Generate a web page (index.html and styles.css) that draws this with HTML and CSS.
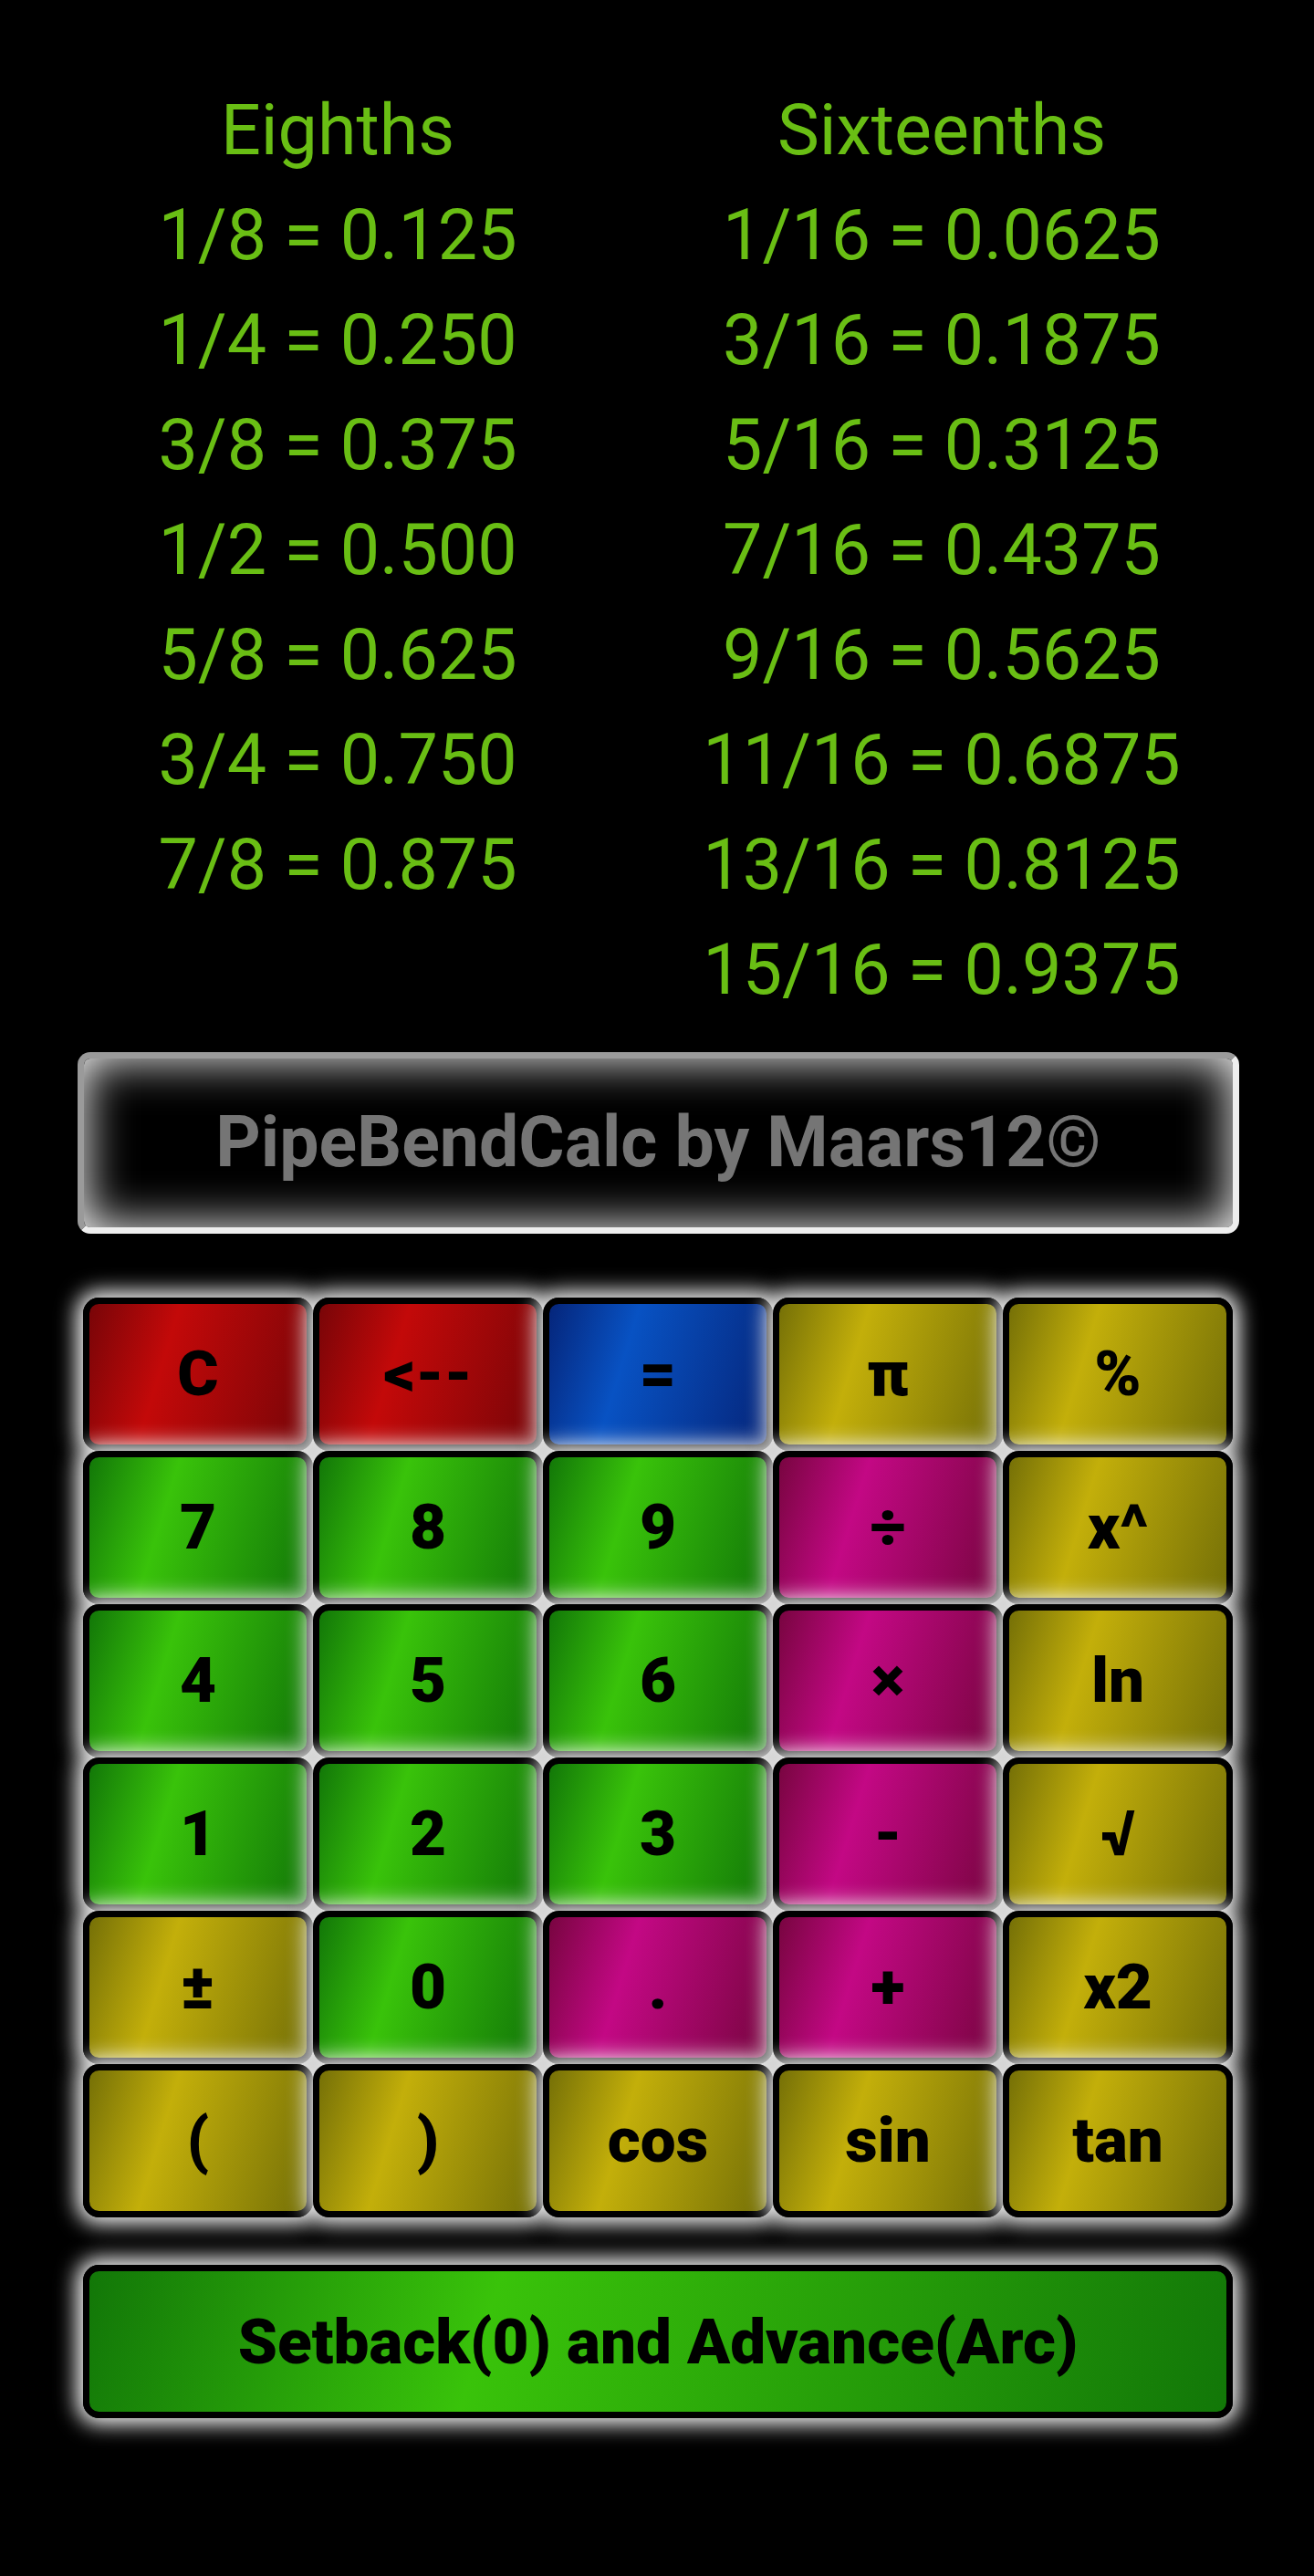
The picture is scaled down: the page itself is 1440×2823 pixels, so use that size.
FILE: index.html
```html
<!DOCTYPE html>
<html lang="en">
<head>
<meta charset="utf-8">
<title>PipeBendCalc</title>
<link rel="stylesheet" href="styles.css">
</head>
<body>
<main class="calculator">
  <section class="fractions">
    <ul class="column eighths">
      <li>Eighths</li><li>1/8 = 0.125</li><li>1/4 = 0.250</li><li>3/8 = 0.375</li><li>1/2 = 0.500</li><li>5/8 = 0.625</li><li>3/4 = 0.750</li><li>7/8 = 0.875</li>
    </ul>
    <ul class="column sixteenths">
      <li>Sixteenths</li><li>1/16 = 0.0625</li><li>3/16 = 0.1875</li><li>5/16 = 0.3125</li><li>7/16 = 0.4375</li><li>9/16 = 0.5625</li><li>11/16 = 0.6875</li><li>13/16 = 0.8125</li><li>15/16 = 0.9375</li>
    </ul>
  </section>
  <div class="display">PipeBendCalc by Maars12©</div>
  <section class="keypad">
    <button class="key red">C</button><button class="key red">&lt;--</button><button class="key blue">=</button><button class="key yellow">π</button><button class="key yellow">%</button>
    <button class="key green">7</button><button class="key green">8</button><button class="key green">9</button><button class="key pink">÷</button><button class="key yellow">x^</button>
    <button class="key green">4</button><button class="key green">5</button><button class="key green">6</button><button class="key pink">×</button><button class="key yellow">ln</button>
    <button class="key green">1</button><button class="key green">2</button><button class="key green">3</button><button class="key pink">-</button><button class="key yellow">√</button>
    <button class="key yellow">±</button><button class="key green">0</button><button class="key pink">.</button><button class="key pink">+</button><button class="key yellow">x2</button>
    <button class="key yellow">(</button><button class="key yellow">)</button><button class="key yellow">cos</button><button class="key yellow">sin</button><button class="key yellow">tan</button>
  </section>
  <button class="key green wide">Setback(0) and Advance(Arc)</button>
</main>
</body>
</html>
```
FILE: styles.css
```css
* { box-sizing: border-box; }

body {
  margin: 0;
  min-height: 2823px;
  background: #000;
  font-family: Roboto, "Liberation Sans", sans-serif;
}

.calculator {
  display: flex;
  flex-direction: column;
  padding: 85px 82px 0 85px;
}

.fractions {
  display: flex;
  height: 1068px;
  padding-left: 60px;
  color: #69be14;
  font-size: 77.2px;
  line-height: 115px;
  text-align: center;
  white-space: nowrap;
}

.column { margin: 0; padding: 0; list-style: none; }
.eighths { width: 450px; }
.sixteenths { width: 550px; margin-left: 162px; }

.display {
  height: 199px;
  border: 7px solid;
  border-color: #9a9a9a #eee #eee #9a9a9a;
  border-radius: 14px;
  box-shadow: inset 0 0 52.5px #fff;
  color: #757575;
  font-size: 77px;
  font-weight: 700;
  line-height: 185px;
  text-align: center;
}

.keypad {
  display: grid;
  grid-template-columns: repeat(5, 252px);
  grid-auto-rows: 168px;
  margin: 70px 0 52px 6px;
}

.key {
  padding: 0 0 1px;
  border: 7px solid #000;
  border-radius: 17.5px;
  box-shadow: 0 0 22px 7px #f6f6f6;
  color: #000;
  font: 900 69.2px Roboto, "Liberation Sans", sans-serif;
}

.wide { width: 1260px; height: 168px; margin-left: 6px; padding: 0; }

.red { background: linear-gradient(107deg, #780508, #c30909 35%, #780508); }
.blue { background: linear-gradient(107deg, #05257a, #0852c3 35%, #05257a); }
.yellow { background: linear-gradient(107deg, #757007, #c3af0a 35%, #757007); }
.green { background: linear-gradient(107deg, #127708, #39c30a 35%, #127708); }
.pink { background: linear-gradient(107deg, #780540, #c30884 35%, #780540); }
```
